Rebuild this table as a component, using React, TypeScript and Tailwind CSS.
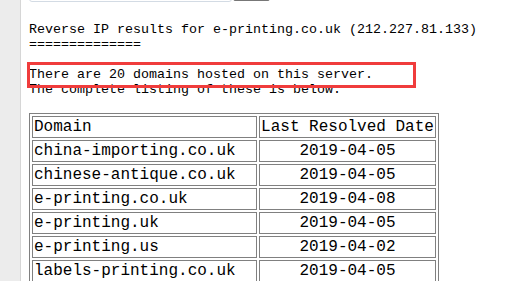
const rows = [
  { domain: 'china-importing.co.uk', date: '2019-04-05' },
  { domain: 'chinese-antique.co.uk', date: '2019-04-05' },
  { domain: 'e-printing.co.uk', date: '2019-04-08' },
  { domain: 'e-printing.uk', date: '2019-04-05' },
  { domain: 'e-printing.us', date: '2019-04-02' },
  { domain: 'labels-printing.co.uk', date: '2019-04-05' },
  { domain: 'printing-china.co.uk', date: '2019-04-05' },
];

export default function App() {
  return (
    <div className="relative flex h-[281px] overflow-hidden bg-white font-['Liberation_Mono','Courier_New',monospace] text-black">
      {/* left gutter */}
      <div className="w-[21px] shrink-0 border-r border-[#d6d6d6] bg-[#ececec]"></div>

      <div className="pl-[8px]">
        {/* search bar, scrolled mostly out of view */}
        <div className="-mt-[20px] flex items-start">
          <div className="h-[22px] w-[203px] rounded-[3px] border border-[#d3dbe4] bg-white"></div>
          <div className="ml-[1px] h-[21px] w-[37px] rounded-[2px] border border-[#777] bg-[#f4f4f4]"></div>
        </div>

        <pre className="mt-[20px] font-['Liberation_Mono','Courier_New',monospace] text-[13.33px] leading-[15px]">
          {'Reverse IP results for e-printing.co.uk (212.227.81.133)\n==============\n\nThere are 20 domains hosted on this server.\nThe complete listing of these is below:'}
        </pre>

        <table className="mt-[16px] border-separate border-spacing-[2px] border border-[#808080] text-[16px] leading-[18px]">
          <tbody>
            <tr>
              <td className="w-[225px] border border-[#808080] p-[1px]">Domain</td>
              <td className="w-[177px] border border-[#808080] p-[1px] text-center">Last Resolved Date</td>
            </tr>
            {rows.map((r) => (
              <tr key={r.domain}>
                <td className="border border-[#808080] p-[1px]">{r.domain}</td>
                <td className="border border-[#808080] p-[1px] text-center">{r.date}</td>
              </tr>
            ))}
          </tbody>
        </table>
      </div>

      {/* annotation highlight */}
      <div className="pointer-events-none absolute left-[27px] top-[62px] h-[26px] w-[389px] border-[3px] border-[#f03c3c]"></div>
    </div>
  );
}
